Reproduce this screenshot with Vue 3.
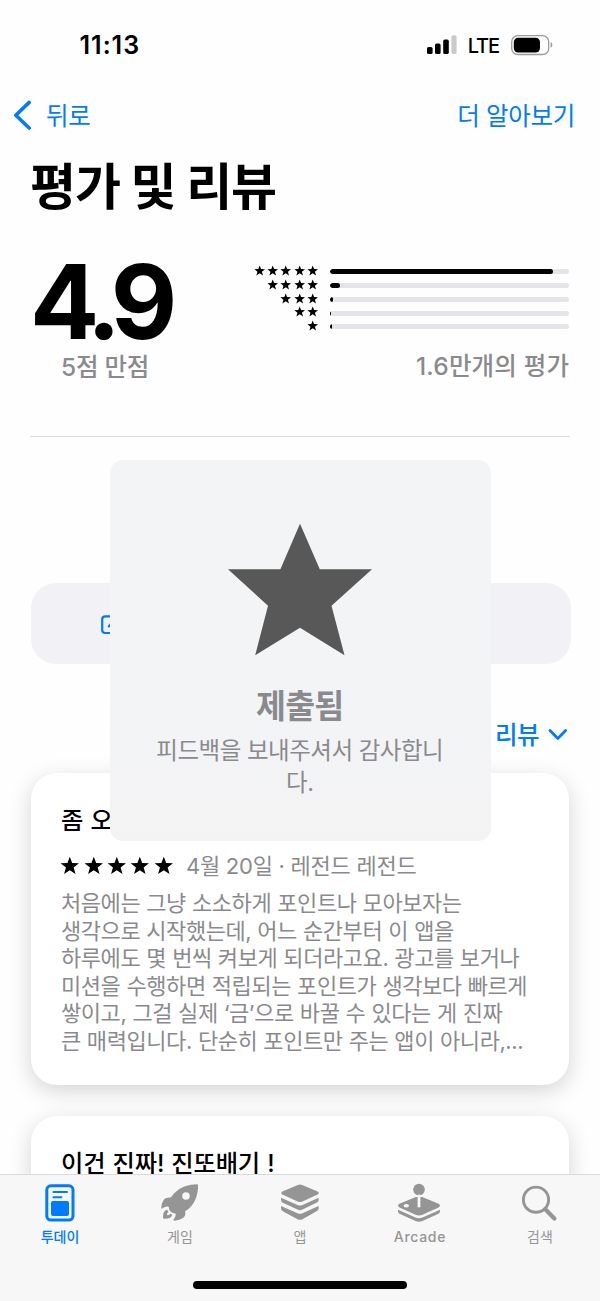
<script setup>
const starPath = 'M12 0.8 L14.9 8.6 L23.2 8.9 L16.7 14.1 L19 22.2 L12 17.5 L5 22.2 L7.3 14.1 L0.8 8.9 L9.1 8.6 Z'
const ratings = [
  { stars: 5, fill: 223 },
  { stars: 4, fill: 10 },
  { stars: 3, fill: 3 },
  { stars: 2, fill: 0.6 },
  { stars: 1, fill: 1.6 },
]
const reviewLines = [
  '처음에는 그냥 소소하게 포인트나 모아보자는',
  '생각으로 시작했는데, 어느 순간부터 이 앱을',
  '하루에도 몇 번씩 켜보게 되더라고요. 광고를 보거나',
  '미션을 수행하면 적립되는 포인트가 생각보다 빠르게',
  '쌓이고, 그걸 실제 ‘금’으로 바꿀 수 있다는 게 진짜',
  '큰 매력입니다. 단순히 포인트만 주는 앱이 아니라,...',
]
</script>

<template>
  <div class="screen">
    <header class="status">
      <span class="time">11:13</span>
      <div class="indicators">
        <svg class="signal" width="30" height="20" viewBox="0 0 30 20">
          <rect x="0" y="12" width="5.6" height="7" rx="1.6" />
          <rect x="8" y="8.4" width="5.6" height="10.6" rx="1.6" />
          <rect x="16.2" y="4.6" width="5.6" height="14.4" rx="1.6" />
          <rect class="dim" x="24.4" y="0.3" width="5.2" height="18.7" rx="1.6" />
        </svg>
        <span class="lte">LTE</span>
        <svg class="battery" width="42" height="21" viewBox="0 0 42 21">
          <rect x="0.7" y="0.7" width="37" height="18.8" rx="6" fill="none" stroke="#9c9c9c" stroke-width="1.3" />
          <rect x="2.8" y="2.7" width="26.2" height="14.8" rx="4.4" fill="#000" />
          <path d="M39.6 7.1 Q41.4 7.9 41.4 9.9 Q41.4 11.9 39.6 12.7 Z" fill="#9c9c9c" />
        </svg>
      </div>
    </header>

    <nav class="nav">
      <div class="back">
        <svg width="20" height="30" viewBox="0 0 20 30"><path d="M16.2 2.4 L2.8 15.2 L16.2 28" fill="none" stroke="#007aff" stroke-width="3.6" stroke-linecap="round" stroke-linejoin="round" /></svg>
        <span>뒤로</span>
      </div>
      <span class="more">더 알아보기</span>
    </nav>

    <h1 class="title">평가 및 리뷰</h1>

    <section class="summary">
      <div class="score">
        <div class="number">4.9</div>
        <div class="caption">5점 만점</div>
      </div>
      <div class="histogram">
        <div v-for="r in ratings" :key="r.stars" class="hrow">
          <div class="hstars">
            <svg v-for="n in r.stars" :key="n" width="11.4" height="11.4" viewBox="0 0 24 24"><path :d="starPath" /></svg>
          </div>
          <div class="track"><div class="fill" :style="{ width: r.fill + 'px' }"></div></div>
        </div>
        <div class="total">1.6만개의 평가</div>
      </div>
    </section>

    <div class="write">
      <svg width="20" height="20" viewBox="0 0 20 20" fill="none" stroke="#007aff" stroke-width="2.2" stroke-linecap="round">
        <path d="M12 1.4 H4.2 Q1.2 1.4 1.2 4.4 V15 Q1.2 18 4.2 18 H15 Q18 18 18 15 V8" />
        <path d="M7.8 11.4 L17 2.4" />
      </svg>
    </div>

    <div class="sort">
      <span>리뷰</span>
      <svg width="20" height="14" viewBox="0 0 20 14"><path d="M2 2.6 L9.8 10.4 L17.6 2.6" fill="none" stroke="#007aff" stroke-width="2.8" stroke-linecap="round" stroke-linejoin="round" /></svg>
    </div>

    <main class="reviews">
      <article class="card">
        <h2>좀 오</h2>
        <div class="meta">
          <div class="mstars">
            <svg v-for="n in 5" :key="n" width="19.6" height="19.6" viewBox="0 0 24 24"><path :d="starPath" /></svg>
          </div>
          <span>4월 20일 · 레전드 레전드</span>
        </div>
        <div class="body">
          <div v-for="line in reviewLines" :key="line">{{ line }}</div>
        </div>
      </article>
      <article class="card">
        <h2>이건 진짜! 진또배기 !</h2>
      </article>
    </main>

    <div class="toast">
      <svg width="144" height="132" viewBox="0 0 144 132"><path d="M72 0 L91.8 45.6 H144 L103.5 82 L116.5 131.5 L72 104 L27.2 131.5 L40 82 L0 45.6 H52.4 Z" transform="translate(0 -0.3)" fill="#585858" /></svg>
      <strong>제출됨</strong>
      <p>피드백을 보내주셔서 감사합니<br>다.</p>
    </div>

    <footer class="tabbar">
      <div class="tabs">
        <div class="tab active">
          <svg width="40" height="42" viewBox="0 0 40 42">
            <rect x="6.8" y="3.8" width="26.2" height="34.2" rx="4" fill="none" stroke="currentColor" stroke-width="3" />
            <path d="M13.4 10.1 H27 M13.4 15.2 H21.4" stroke="currentColor" stroke-width="2" stroke-linecap="round" />
            <rect x="11" y="19" width="18" height="15" rx="2" />
          </svg>
          <span>투데이</span>
        </div>
        <div class="tab">
          <svg width="40" height="42" viewBox="0 0 40 42">
            <path fill-rule="evenodd" d="M37 2.2 C29 2.3 20.5 4.8 14.5 11 C12.7 12.9 11.8 14.2 11 15.5 C7.5 15.1 4.6 16 3.2 18.7 C1.8 21.3 1.3 23.8 1.3 26 C1.3 27.1 2.2 26.8 3 26.1 C4.8 24.6 6.8 24.2 8.8 24.9 C8.8 28.6 11.6 31.2 15.6 31.4 C15.9 33.6 15.2 35.2 13.8 37 C13.2 38 13.4 38.7 14.6 38.7 C17.5 38.6 21 37.6 23.5 35.6 C25.5 34 25.6 31.5 25.2 29 C27 28.1 28.6 27 30.2 25.3 C36 19.3 38.2 11 38 3.5 C38 2.6 37.7 2.2 37 2.2 Z M26 10.2 a3.8 3.8 0 1 0 0 7.6 a3.8 3.8 0 1 0 0 -7.6 Z" />
            <path d="M7.2 27.8 C4.2 28.4 2.9 31 3.1 35.7 Q3.1 36.8 4.3 36.8 C8.9 37 11.7 35.6 12.2 32.7 L10.2 31.6 C9.7 32.9 8.8 33.4 7.3 33.2 C6.8 31.7 7.2 30.7 8.5 29.9 Z" />
          </svg>
          <span>게임</span>
        </div>
        <div class="tab">
          <svg width="40" height="42" viewBox="0 0 40 42">
            <path d="M17.8 3 Q20 2.1 22.2 3 L37.6 9.4 Q40 10.9 37.6 12.5 L22.5 19.4 Q20 20.5 17.5 19.4 L2.4 12.5 Q0 10.9 2.4 9.4 Z" />
            <path d="M1 15.7 L17.5 22.9 Q20 24 22.5 22.9 L38.6 15.7 V17.8 Q38.6 19.8 36.9 20.6 L22.5 27.6 Q20 28.8 17.5 27.6 L2.8 20.8 Q1 19.8 1 17.8 Z" />
            <path d="M1 24 L17.5 31.2 Q20 32.3 22.5 31.2 L38.6 24 V26.3 Q38.6 28.3 36.9 29.1 L22.5 37.2 Q20 38.4 17.5 37.2 L2.8 29.3 Q1 28.3 1 26.3 Z" />
          </svg>
          <span>앱</span>
        </div>
        <div class="tab">
          <svg class="wide" width="44" height="42" viewBox="-2 0 44 42">
            <circle cx="19" cy="7.6" r="5.8" />
            <path d="M15.8 15 L0 21.5 Q-4 23.8 0 25.7 L15.5 32.8 Q19 34.2 22.5 32.8 L38 25.7 Q42 23.8 38 21.5 L22.2 15 Z" />
            <path d="M-2 27.8 L15.5 35.6 Q19 36.9 22.5 35.6 L40 27.8 V29.6 Q39.8 31.3 38 32.1 L22.5 39 Q19 40.4 15.5 39 L0 32.1 Q-2 31.3 -2 29.6 Z" />
            <path d="M19 14 V24.2" stroke="#f7f7f7" stroke-width="2.8" stroke-linecap="round" />
            <ellipse cx="6.3" cy="23.8" rx="2.7" ry="1.8" fill="#f7f7f7" />
          </svg>
          <span class="latin">Arcade</span>
        </div>
        <div class="tab">
          <svg width="40" height="42" viewBox="0 0 40 42" fill="none" stroke="currentColor">
            <circle cx="16" cy="17.7" r="12.6" stroke-width="2.9" />
            <path d="M25.3 27.2 L34.4 36.4" stroke-width="4.2" stroke-linecap="round" />
          </svg>
          <span>검색</span>
        </div>
      </div>
      <div class="home"></div>
    </footer>
  </div>
</template>

<style>
body {
  background: #fefefe;
}
</style>

<style scoped>
.screen {
  position: relative;
  width: 600px;
  height: 1301px;
  overflow: hidden;
  box-sizing: border-box;
  background: #fefefe;
  color: #000;
  font-family: Inter, 'Noto Sans CJK KR', sans-serif;
  white-space: nowrap;
}
svg {
  display: block;
  flex: none;
}
.status {
  height: 88px;
  display: flex;
  justify-content: space-between;
  padding: 0 47px 0 79.5px;
}
.time {
  font-size: 25px;
  font-weight: 600;
  line-height: 90px;
  letter-spacing: 1px;
}
.indicators {
  display: flex;
  align-items: center;
  height: 90px;
}
.signal .dim {
  fill: #cacaca;
}
.lte {
  font-size: 20px;
  font-weight: 500;
  letter-spacing: -1.1px;
  margin: 1px 12px 0 11px;
}
.nav {
  height: 54px;
  display: flex;
  align-items: center;
  justify-content: space-between;
  padding: 0 25px 0 13px;
  color: #007aff;
  font-size: 24.5px;
  line-height: 30px;
  letter-spacing: -0.3px;
}
.nav span {
  position: relative;
  top: 1px;
}
.back {
  display: flex;
  align-items: center;
  gap: 13px;
}
.title {
  margin: 15px 0 0 30px;
  font-size: 50px;
  font-weight: 700;
  line-height: 60px;
  letter-spacing: -1.1px;
}
.summary {
  display: flex;
  justify-content: space-between;
  height: 220px;
  margin: 0 30px;
  box-sizing: border-box;
  border-bottom: 1px solid #dcdcde;
}
.score {
  width: 150px;
  padding-top: 35px;
}
.number {
  font-size: 102.5px;
  font-weight: 700;
  line-height: 100px;
  letter-spacing: -9px;
}
.caption,
.total {
  color: #8a8a8e;
  font-size: 24.5px;
  font-weight: 500;
  line-height: 30px;
  letter-spacing: -0.3px;
}
.caption {
  text-align: center;
}
.histogram {
  padding: 48px 0.7px 0 0;
}
.hrow {
  display: flex;
  align-items: center;
  justify-content: flex-end;
  gap: 12px;
  height: 13.75px;
}
.hstars {
  display: flex;
  gap: 1.85px;
  margin-top: -2px;
}
.track {
  width: 239px;
  height: 4.8px;
  border-radius: 3px;
  background: #e4e4e9;
  overflow: hidden;
}
.fill {
  height: 100%;
  border-radius: 3px;
  background: #000;
}
.total {
  margin-top: 17px;
  text-align: right;
  letter-spacing: 0.2px;
}
.write {
  display: flex;
  align-items: center;
  height: 81px;
  margin: 146px 29px 0 31px;
  padding: 2px 0 0 69.5px;
  box-sizing: border-box;
  border-radius: 25px;
  background: #f2f1f6;
}
.sort {
  display: flex;
  align-items: center;
  justify-content: flex-end;
  gap: 9px;
  height: 30px;
  margin: 54px 32px 25px 0;
  color: #007aff;
  font-size: 24.5px;
  font-weight: 500;
  letter-spacing: -0.5px;
}
.sort svg {
  margin-top: 3px;
}
.reviews {
  display: flex;
  flex-direction: column;
  gap: 31px;
  padding: 0 31px;
}
.card {
  height: 312px;
  flex: none;
  box-sizing: border-box;
  padding: 31px 30px 0;
  border-radius: 26px;
  background: #fff;
  box-shadow: 0 6px 22px rgba(0, 0, 0, 0.17);
}
.card h2 {
  margin: 0;
  font-size: 24.3px;
  font-weight: 500;
  line-height: 32px;
  letter-spacing: -0.2px;
  word-spacing: 1px;
}
.meta {
  display: flex;
  align-items: center;
  gap: 12.5px;
  height: 30px;
  margin: 14px 0 0 -0.7px;
  color: #8a8a8e;
  font-size: 22px;
  line-height: 28px;
  letter-spacing: -0.25px;
}
.meta span {
  margin-top: 1px;
}
.mstars {
  display: flex;
  gap: 3.8px;
  padding-top: 2px;
}
.body {
  margin-top: 10px;
  color: #8a8a8e;
  font-size: 22px;
  line-height: 27.6px;
  letter-spacing: -0.43px;
  word-spacing: 0.3px;
}
.toast {
  position: absolute;
  left: 110px;
  top: 460px;
  width: 381px;
  height: 381px;
  box-sizing: border-box;
  padding: 64px 1.5px 0 0;
  display: flex;
  flex-direction: column;
  align-items: center;
  border-radius: 13px;
  background: linear-gradient(#f3f4f6 60%, #f3f3f4);
  color: #8a8a8e;
}
.toast strong {
  margin-top: 29px;
  font-size: 32.5px;
  font-weight: 700;
  line-height: 44px;
  letter-spacing: -0.8px;
}
.toast p {
  margin: 6px 0 0;
  text-align: center;
  font-size: 23.5px;
  line-height: 32px;
  letter-spacing: -0.5px;
}
.tabbar {
  position: absolute;
  left: 0;
  right: 0;
  bottom: 0;
  height: 127.5px;
  box-sizing: border-box;
  border-top: 1px solid #dadada;
  background: #f7f7f7;
}
.tabs {
  display: grid;
  grid-template-columns: repeat(5, 120px);
  padding-top: 7.5px;
}
.tab {
  display: flex;
  flex-direction: column;
  align-items: center;
  color: #959595;
  fill: currentColor;
  font-size: 14px;
  font-weight: 400;
  line-height: 20px;
}
.tab span {
  margin-top: 3px;
}
.tab.active {
  color: #007aff;
  font-weight: 500;
}
.tab .latin {
  font-weight: 500;
  letter-spacing: 0.7px;
}
.wide {
  overflow: visible;
}
.home {
  width: 214px;
  height: 8px;
  margin: 34px auto 0;
  border-radius: 4px;
  background: #000;
}
</style>
